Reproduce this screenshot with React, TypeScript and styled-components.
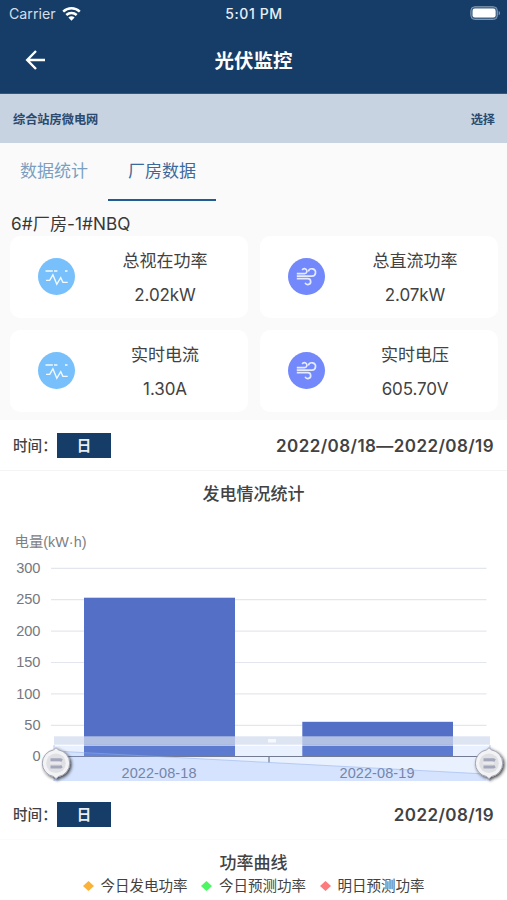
import React from "react";
import styled, { createGlobalStyle } from "styled-components";

const GlobalStyle = createGlobalStyle`
  * { box-sizing: border-box; }
  body {
    margin: 0;
    background: #fff;
    color: #424242;
    font-family: Inter, "Noto Sans CJK SC", sans-serif;
    overflow: hidden;
  }
`;

const Screen = styled.main`
  width: 507px;
  height: 900px;
  display: flex;
  flex-direction: column;
  overflow: hidden;
  background: #fff;
`;

const StatusBar = styled.div`
  height: 28px;
  flex: none;
  padding: 0 6px 0 9px;
  display: grid;
  grid-template-columns: 1fr auto 1fr;
  align-items: center;
  background: #153d67;
  color: #e9eef4;
  font-size: 14.2px;
  line-height: 28px;
`;

const Carrier = styled.div`
  display: flex;
  align-items: center;
  gap: 6px;
  color: #d3dde8;
`;

const Clock = styled.div`
  font-weight: 500;
  font-size: 14px;
  letter-spacing: 0.6px;
  padding-right: 2px;
`;

const Battery = styled.div`
  display: flex;
  justify-content: flex-end;
`;

const NavBar = styled.header`
  height: 66px;
  flex: none;
  padding: 0 24px;
  display: grid;
  grid-template-columns: 60px 1fr 60px;
  align-items: center;
  background: #153d67;
  border-bottom: 1px solid #335980;
  color: #fff;
`;

const BackButton = styled.button`
  padding: 0 0 2px;
  border: 0;
  background: none;
  display: flex;
`;

const NavTitle = styled.h1`
  margin: 0;
  text-align: center;
  font-size: 19.5px;
  line-height: 30px;
  font-weight: 700;
`;

const SiteBar = styled.div`
  height: 49px;
  flex: none;
  padding: 2px 12px 0 13px;
  display: flex;
  justify-content: space-between;
  align-items: center;
  background: #c8d3e1;
  color: #2a4a70;
  font-size: 12.2px;
  font-weight: 700;
  line-height: 20px;
`;

const DataPanel = styled.section`
  height: 277px;
  flex: none;
  background: #fafafa;
`;

const Tabs = styled.nav`
  display: flex;
  height: 58px;
`;

const Tab = styled.button<{ $active?: boolean }>`
  width: 108px;
  padding: 0 0 1px;
  border: 0;
  border-bottom: 2.5px solid ${(p) => (p.$active ? "#1f5c93" : "transparent")};
  background: none;
  font-family: inherit;
  font-size: 17px;
  line-height: 24px;
  color: ${(p) => (p.$active ? "#3a6a9b" : "#7b9fc0")};
`;

const DeviceName = styled.div`
  height: 35px;
  padding: 10px 11px 0;
  font-size: 17.2px;
  letter-spacing: 0.05px;
  line-height: 26px;
  color: #383838;
`;

const CardGrid = styled.div`
  display: grid;
  grid-template-columns: 238px 238px;
  grid-auto-rows: 82px;
  gap: 12px;
  padding: 0 10px;
`;

const Card = styled.article`
  display: grid;
  grid-template-columns: 93px 124px;
  align-items: center;
  border-radius: 10px;
  background: #fff;
`;

const IconDisc = styled.div<{ $color: string }>`
  width: 37px;
  height: 37px;
  margin: 0 auto 2px;
  border-radius: 50%;
  background: ${(p) => p.$color};
`;

const Reading = styled.div`
  padding-top: 2px;
  text-align: center;
  font-size: 17px;
  line-height: 34px;
  white-space: nowrap;
`;

const ReadingValue = styled.div`
  font-size: 17px;
  letter-spacing: -0.1px;
`;

const TimeRow = styled.div<{ $height: number; $line: string }>`
  height: ${(p) => p.$height}px;
  flex: none;
  padding: 0 13px;
  display: flex;
  align-items: center;
  border-bottom: 1px solid ${(p) => p.$line};
`;

const TimeLabel = styled.span`
  width: 44px;
  white-space: nowrap;
  font-size: 14.6px;
  font-weight: 500;
  line-height: 24px;
  padding-top: 1px;
`;

const PeriodButton = styled.button`
  width: 54px;
  height: 25px;
  padding: 0;
  border: 0;
  background: #153d67;
  color: #e8edf3;
  font-family: inherit;
  font-size: 14.5px;
  font-weight: 700;
  line-height: 25px;
`;

const DateText = styled.span`
  margin-left: auto;
  font-size: 17px;
  font-weight: 600;
  line-height: 24px;
  letter-spacing: 0.42px;
  padding-top: 1px;
`;

const SectionTitle = styled.h2<{ $height: number }>`
  height: ${(p) => p.$height}px;
  flex: none;
  margin: 0;
  text-align: center;
  font-size: 17px;
  font-weight: 500;
  line-height: 46px;
`;

const ChartSvg = styled.svg`
  display: block;
  flex: none;
  font-family: "Liberation Sans", "Noto Sans CJK SC", sans-serif;
`;

const Legend = styled.div`
  display: flex;
  justify-content: center;
  gap: 13.5px;
  font-size: 14.5px;
  line-height: 22px;
`;

const LegendItem = styled.div`
  display: flex;
  align-items: center;
  gap: 7px;
`;

const WifiIcon = () => (
  <svg width="19" height="15" viewBox="0 0 19 15">
    <g fill="none" stroke="#fff" strokeWidth="2.5">
      <path d="M1.2 4.7C6 .2 13 .2 17.8 4.7" />
      <path d="M4.3 8c3-2.8 7.400-2.800 10.400 0" />
    </g>
    <path d="M6.400 10.400c1.800-1.600 4.400-1.600 6.200 0L9.500 13.800z" fill="#fff" />
  </svg>
);

const BatteryIcon = () => (
  <svg width="31" height="16" viewBox="0 0 31 16">
    <rect x=".8" y=".7" width="26.600" height="12.800" rx="4" fill="#44658a" stroke="#8098b1" />
    <rect x="2.600" y="2.600" width="23" height="9" rx="2.400" fill="#fff" />
    <path d="M28.700 4.900v4.400c1.700-.6 1.700-3.800 0-4.400" fill="#8098b1" />
  </svg>
);

const BackIcon = () => (
  <svg width="22" height="22" viewBox="0 0 22 22" fill="none" stroke="#fff" strokeWidth="2.400">
    <path d="M21 11H3.200M12 2 3.200 11l8.800 9" />
  </svg>
);

const PulseIcon = () => (
  <svg width="37" height="37" viewBox="0 0 37 37" fill="none" stroke="#f2faff">
    <path d="M7.500 13h7.300M16 13h3.400M27 13h2.500" strokeWidth="1.500" />
    <path d="M8 22.400h3.700l3.200-5.600 3.900 9.500 3.900-6.600 2.200 4.700h4.800" strokeWidth="1.400" />
  </svg>
);

const WindIcon = () => (
  <svg width="37" height="37" viewBox="0 0 37 37" fill="none" stroke="#e4eaff" strokeWidth="1.700">
    <path d="M8.800 15.700h7.700a2.500 2.500 0 1 0-2.300-3.700" />
    <path d="M8.800 18.200h15a3.700 3.700 0 1 0-3.500-4.800" />
    <path d="M8.800 20.700h11a2.900 2.900 0 1 1-2.700 4" />
  </svg>
);

const METRICS = [
  { title: "总视在功率", value: "2.02kW", kind: "pulse" },
  { title: "总直流功率", value: "2.07kW", kind: "wind" },
  { title: "实时电流", value: "1.30A", kind: "pulse" },
  { title: "实时电压", value: "605.70V", kind: "wind" },
];

const LEGEND = [
  { label: "今日发电功率", color: "#fbb238" },
  { label: "今日预测功率", color: "#4cf763" },
  { label: "明日预测功率", color: "#fc7b7d" },
];

const ZoomHandle = ({ x }: { x: number }) => (
  <g transform={`translate(${x} 247.200)`}>
    <path
      d="M0-15.500 2.500-13.300A13.500 13.500 0 0 1 2.500 13.300L0 15.500l-2.500-2.200A13.500 13.500 0 0 1-2.500-13.300Z"
      fill="#f3f3f6"
      stroke="#9fa4b2"
      filter="url(#handleShadow)"
    />
    <circle r="9.800" fill="#dfe0e4" />
    <path d="M-5.500-3.500H4.500L6-2.500M-5.500 3.800H4.500L6 3" fill="none" stroke="#a4a6bb" strokeWidth="3" />
    <path d="M-6-.2H5" stroke="#eeeef2" strokeWidth="1.500" />
  </g>
);

const GenerationChart = () => (
  <ChartSvg width="507" height="274" viewBox="0 0 507 274">
    <defs>
      <filter id="handleShadow" x="-40%" y="-30%" width="200%" height="180%">
        <feDropShadow dx="1.500" dy="1.500" stdDeviation="1.500" floodColor="#222" floodOpacity=".8" />
      </filter>
    </defs>
    <text x="14.500" y="31" fontSize="14.400" fill="#7d8085">电量(kW·h)</text>
    {[300, 250, 200, 150, 100, 50, 0].map((tick, i) => (
      <g key={tick}>
        {tick > 0 && <path d={`M51 ${52.3 + i * 31.4}H486.500`} stroke="#e3e7ed" strokeWidth="1.200" />}
        <text x="40.500" y={56.9 + i * 31.4} fontSize="14.600" textAnchor="end" fill="#75787f">{tick}</text>
      </g>
    ))}
    <rect x="84" y="81.700" width="151" height="158.800" fill="#546fc6" />
    <rect x="302.300" y="205.800" width="150.700" height="34.700" fill="#546fc6" />
    <path d="M51 240.500H486.500M269 240.500v6" fill="none" stroke="#6e7079" strokeWidth="1.200" />
    <g fontSize="14.500" textAnchor="middle" fill="#6e7079">
      <text x="159" y="262.200" textLength="75">2022-08-18</text>
      <text x="377" y="262.200" textLength="75">2022-08-19</text>
    </g>
    <rect x="54" y="220.300" width="436" height="8.500" fill="#d2dbee" fillOpacity=".75" />
    <rect x="268" y="223" width="8" height="3.500" fill="#fff" fillOpacity=".75" />
    <path d="M54 229.300H490" stroke="#fff" strokeOpacity=".75" />
    <rect x="54" y="229.800" width="436" height="35.200" fill="#87afff" fillOpacity=".18" />
    <path d="M54 235 486 258v7H54Z" fill="#87afff" fillOpacity=".2" />
    <path d="M54 235 486 258" stroke="#8faee9" strokeOpacity=".65" strokeWidth=".8" />
    <path d="M54 229v36M490 229v36" stroke="#a9bcec" strokeWidth=".8" />
    <ZoomHandle x={56} />
    <ZoomHandle x={489} />
  </ChartSvg>
);

type TimeFilterProps = { date: string; height: number; line: string };

const TimeFilter = ({ date, height, line }: TimeFilterProps) => (
  <TimeRow $height={height} $line={line}>
    <TimeLabel>时间：</TimeLabel>
    <PeriodButton>日</PeriodButton>
    <DateText>{date}</DateText>
  </TimeRow>
);

export default function App() {
  return (
    <Screen>
      <GlobalStyle />
      <StatusBar>
        <Carrier>Carrier <WifiIcon /></Carrier>
        <Clock>5:01 PM</Clock>
        <Battery><BatteryIcon /></Battery>
      </StatusBar>
      <NavBar>
        <BackButton aria-label="返回"><BackIcon /></BackButton>
        <NavTitle>光伏监控</NavTitle>
      </NavBar>
      <SiteBar><span>综合站房微电网</span><span>选择</span></SiteBar>
      <DataPanel>
        <Tabs>
          <Tab>数据统计</Tab>
          <Tab $active>厂房数据</Tab>
        </Tabs>
        <DeviceName>6#厂房-1#NBQ</DeviceName>
        <CardGrid>
          {METRICS.map((m) => (
            <Card key={m.title}>
              <IconDisc $color={m.kind === "pulse" ? "#78c0fb" : "#7388fa"}>
                {m.kind === "pulse" ? <PulseIcon /> : <WindIcon />}
              </IconDisc>
              <Reading>
                <div>{m.title}</div>
                <ReadingValue>{m.value}</ReadingValue>
              </Reading>
            </Card>
          ))}
        </CardGrid>
      </DataPanel>
      <TimeFilter date="2022/08/18—2022/08/19" height={51} line="#f4f4f4" />
      <SectionTitle $height={45}>发电情况统计</SectionTitle>
      <GenerationChart />
      <TimeFilter date="2022/08/19" height={50} line="#fbfbfb" />
      <SectionTitle $height={35}>功率曲线</SectionTitle>
      <Legend>
        {LEGEND.map((item) => (
          <LegendItem key={item.label}>
            <svg width="11" height="10" viewBox="0 0 11 10">
              <path d="M5.500 0 11 5 5.500 10 0 5Z" fill={item.color} />
            </svg>
            {item.label}
          </LegendItem>
        ))}
      </Legend>
    </Screen>
  );
}
